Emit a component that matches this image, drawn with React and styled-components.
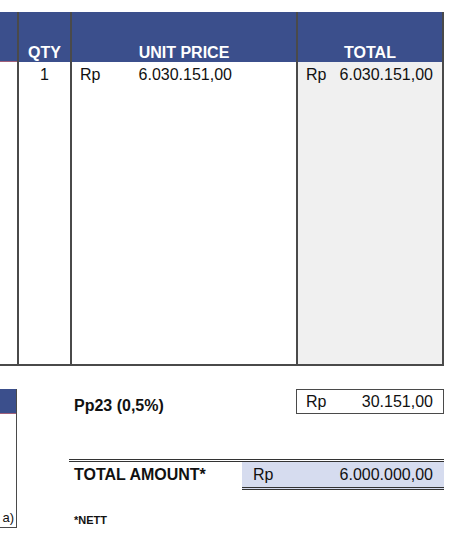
import React from "react";
import styled, { createGlobalStyle } from "styled-components";

const GlobalStyle = createGlobalStyle`
  body {
    margin: 0;
    background: #ffffff;
    font-family: "Liberation Sans", Arial, sans-serif;
    color: #111111;
  }
  * {
    box-sizing: border-box;
  }
`;

const NAVY = "#3b4f8c";
const LINE = "#4a4a4a";

const Sheet = styled.div`
  width: 444px;
  padding-top: 12px;
`;

const ItemsGrid = styled.div`
  display: grid;
  grid-template-columns: 17px 53px 226px 148px;
  grid-template-rows: 50px 304px;
`;

const HeadCell = styled.div`
  background: ${NAVY};
  color: #ffffff;
  font-weight: bold;
  font-size: 16px;
  line-height: 18px;
  display: flex;
  align-items: flex-end;
  justify-content: center;
  border-left: ${(p) => (p.$first ? "none" : `2px solid ${LINE}`)};
  border-right: ${(p) => (p.$last ? `2px solid ${LINE}` : "none")};
  border-bottom: ${(p) => (p.$first ? "1px solid #a0607a" : "none")};
`;

const BodyCell = styled.div`
  font-size: 16px;
  line-height: 18px;
  padding-top: 4px;
  background: ${(p) => (p.$shaded ? "#f0f0f0" : "#ffffff")};
  border-bottom: 2px solid ${LINE};
  border-left: ${(p) => (p.$first ? "none" : `2px solid ${LINE}`)};
  border-right: ${(p) => (p.$last ? `2px solid ${LINE}` : "none")};
`;

const QtyCell = styled(BodyCell)`
  text-align: center;
`;

const MoneyCell = styled(BodyCell)`
  display: flex;
  align-items: flex-start;
  justify-content: space-between;
  padding-left: ${(p) => p.$padLeft}px;
  padding-right: ${(p) => p.$padRight}px;
`;

const Summary = styled.div`
  display: flex;
  align-items: flex-start;
  margin-top: 23px;
`;

const StubBox = styled.div`
  width: 17px;
  height: 139px;
  display: flex;
  flex-direction: column;
  border-right: 1.5px solid ${LINE};
  border-bottom: 1.5px solid ${LINE};
`;

const StubHead = styled.div`
  height: 25px;
  background: ${NAVY};
  border-bottom: 1px solid #a0607a;
`;

const StubText = styled.div`
  flex: 1;
  display: flex;
  align-items: flex-end;
  justify-content: flex-end;
  font-size: 13px;
  padding: 0 2px 2px 0;
  white-space: nowrap;
  overflow: hidden;
`;

const SummaryCol = styled.div`
  width: 375px;
  margin-left: 52px;
  display: flex;
  flex-direction: column;
`;

const TaxRow = styled.div`
  display: flex;
  height: 25px;
`;

const Label = styled.div`
  flex: 1;
  font-weight: bold;
  font-size: ${(p) => p.$size || 16}px;
  line-height: 18px;
  padding-left: 5px;
  padding-top: ${(p) => p.$top || 0}px;
`;

const TaxBox = styled.div`
  width: 148px;
  border: 1.5px solid ${LINE};
  display: flex;
  align-items: center;
  justify-content: space-between;
  padding: 0 10px 0 9px;
  font-size: 16px;
`;

const TotalRow = styled.div`
  display: flex;
  margin-top: 45px;
  border-top: 3px double #333333;
`;

const AmountCell = styled.div`
  width: 202px;
  height: 28px;
  background: #d6dcef;
  border-bottom: 3px double #333333;
  display: flex;
  align-items: center;
  justify-content: space-between;
  padding: 0 11px;
  font-size: 16px;
`;

const Note = styled.div`
  font-weight: bold;
  font-size: 11px;
  line-height: 13px;
  padding-left: 5px;
  margin-top: 24px;
`;

export default function App() {
  return (
    <>
      <GlobalStyle />
      <Sheet>
        <ItemsGrid>
          <HeadCell $first />
          <HeadCell>QTY</HeadCell>
          <HeadCell>UNIT PRICE</HeadCell>
          <HeadCell $last>TOTAL</HeadCell>

          <BodyCell $first />
          <QtyCell>1</QtyCell>
          <MoneyCell $padLeft={8} $padRight={64}>
            <span>Rp</span>
            <span>6.030.151,00</span>
          </MoneyCell>
          <MoneyCell $shaded $last $padLeft={8} $padRight={9}>
            <span>Rp</span>
            <span>6.030.151,00</span>
          </MoneyCell>
        </ItemsGrid>

        <Summary>
          <StubBox>
            <StubHead />
            <StubText>a)</StubText>
          </StubBox>
          <SummaryCol>
            <TaxRow>
              <Label $top={8}>Pp23 (0,5%)</Label>
              <TaxBox>
                <span>Rp</span>
                <span>30.151,00</span>
              </TaxBox>
            </TaxRow>
            <TotalRow>
              <Label $top={4}>TOTAL AMOUNT*</Label>
              <AmountCell>
                <span>Rp</span>
                <span>6.000.000,00</span>
              </AmountCell>
            </TotalRow>
            <Note>*NETT</Note>
          </SummaryCol>
        </Summary>
      </Sheet>
    </>
  );
}
